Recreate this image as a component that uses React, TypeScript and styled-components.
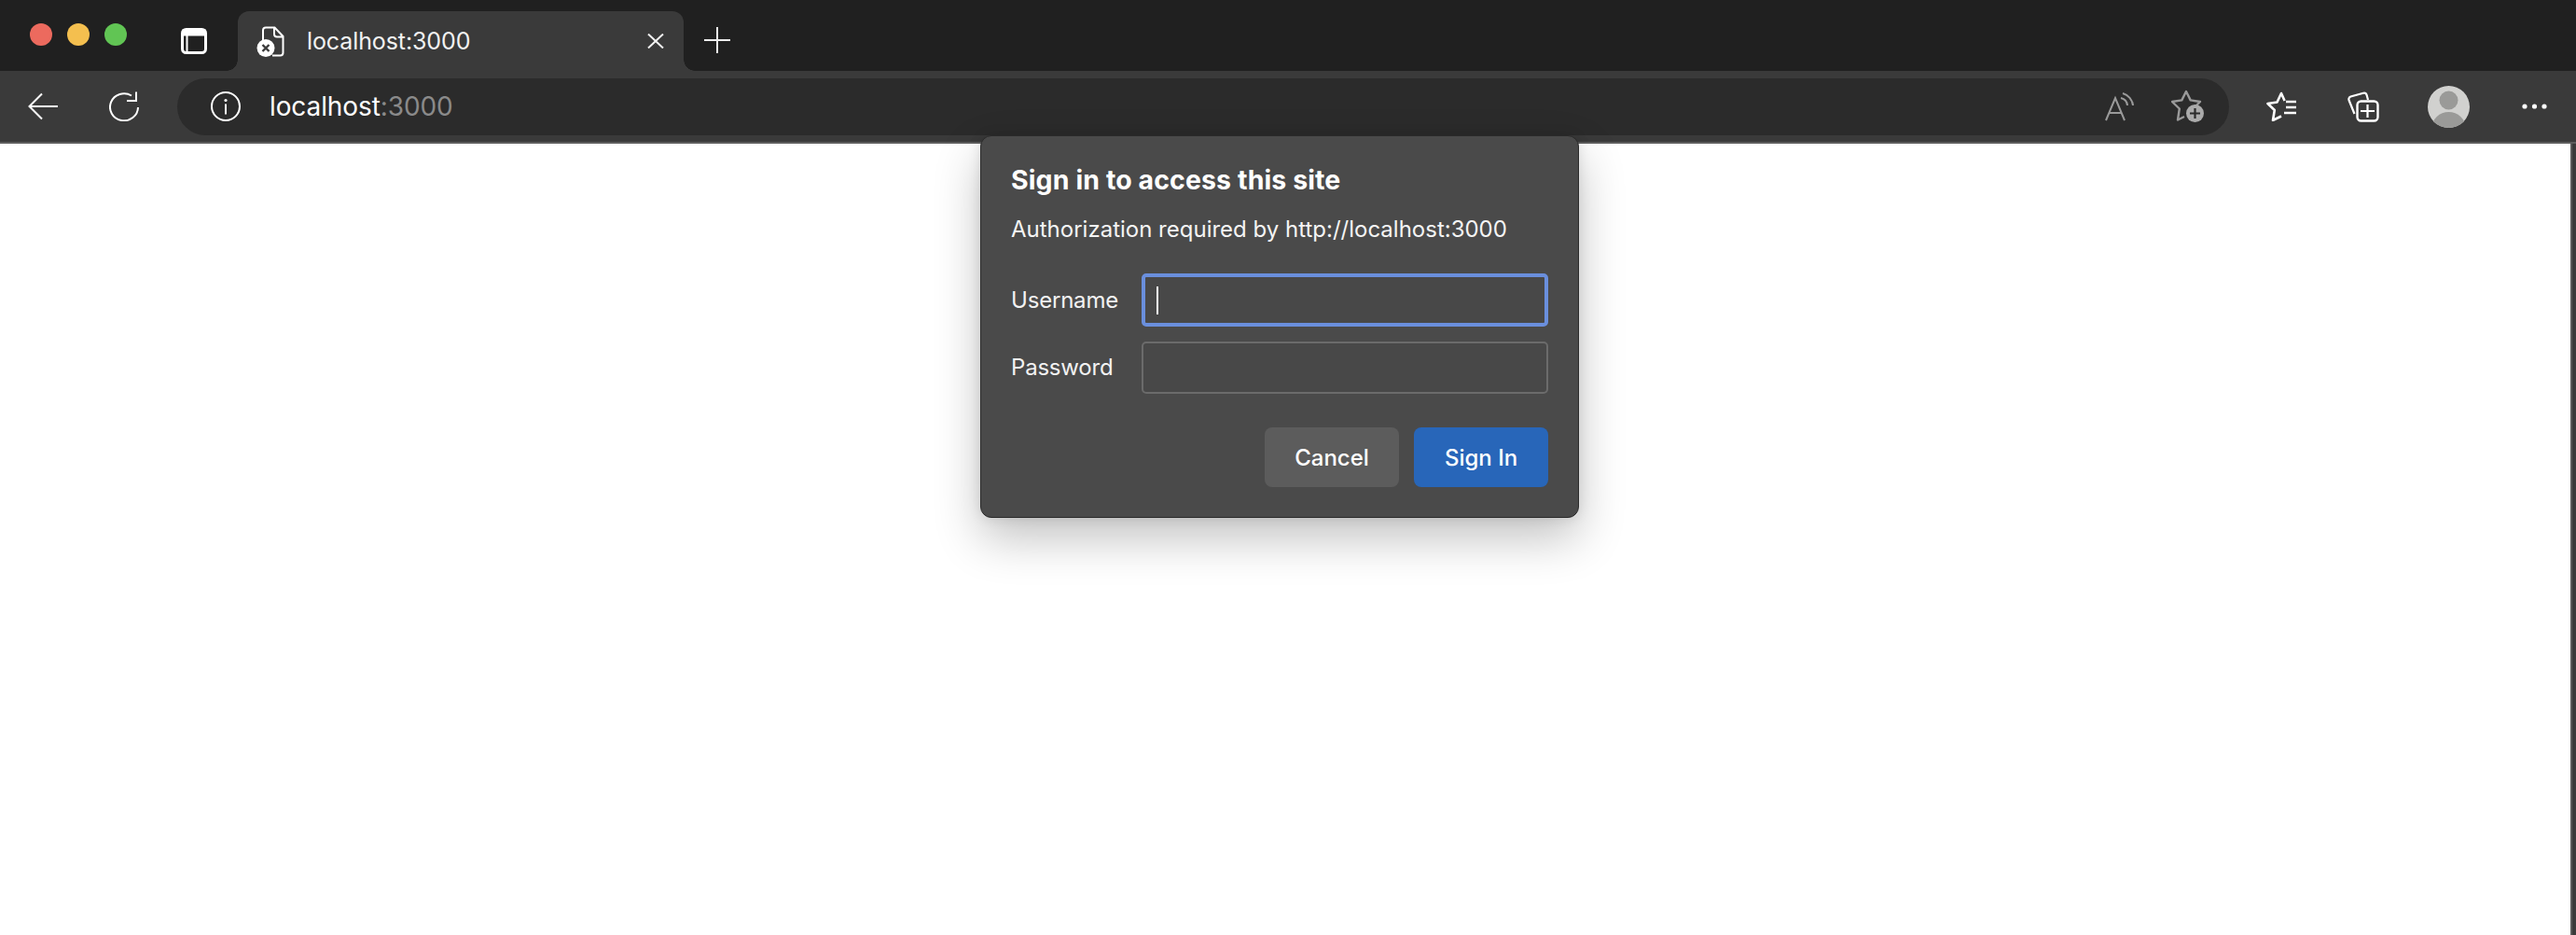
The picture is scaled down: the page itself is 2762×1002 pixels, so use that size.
import React from "react";
import styled, { createGlobalStyle } from "styled-components";

const Global = createGlobalStyle`
  html, body { margin: 0; padding: 0; background: #fff; }
  body { font-family: Inter, "Liberation Sans", sans-serif; -webkit-font-smoothing: antialiased; }
  * { box-sizing: border-box; }
`;

const Window = styled.div`
  position: relative;
  display: flex;
  flex-direction: column;
  width: 2762px;
  height: 1002px;
  overflow: hidden;
  background: #fff;
`;

const TabStrip = styled.header`
  display: flex;
  align-items: flex-start;
  height: 76px;
  padding-left: 32px;
  background: #202020;
  flex: none;
`;

const Lights = styled.div`
  display: flex;
  gap: 16px;
  margin-top: 25px;
`;

const Light = styled.span<{ $color: string }>`
  width: 24px;
  height: 24px;
  border-radius: 50%;
  background: ${(p) => p.$color};
`;

const StripIcon = styled.svg<{ $left: number; $top: number }>`
  flex: none;
  display: block;
  margin-left: ${(p) => p.$left}px;
  margin-top: ${(p) => p.$top}px;
`;

const Tab = styled.div`
  position: relative;
  display: flex;
  align-items: center;
  flex: none;
  width: 478px;
  height: 64px;
  margin-top: 12px;
  margin-left: 33px;
  padding: 0 21px 0 20px;
  background: #3a3a3a;
  border-radius: 12px 12px 0 0;

  &::before,
  &::after {
    content: "";
    position: absolute;
    bottom: 0;
    width: 12px;
    height: 12px;
    background: radial-gradient(circle at var(--cx) 0, #202020 11.5px, #3a3a3a 12px);
  }
  &::before { left: -12px; --cx: 0; }
  &::after { right: -12px; --cx: 12px; }
`;

const TabTitle = styled.span`
  flex: 1;
  margin-left: 24px;
  font-size: 25px;
  line-height: 32px;
  letter-spacing: -0.1px;
  color: #f2f2f2;
`;

const Toolbar = styled.nav`
  display: flex;
  align-items: center;
  flex: none;
  height: 78px;
  background: #3a3a3a;
  border-bottom: 2px solid #5d5d5d;
`;

const ToolIcon = styled.svg<{ $left: number }>`
  flex: none;
  display: block;
  margin-left: ${(p) => p.$left}px;
`;

const Omnibox = styled.div`
  display: flex;
  align-items: center;
  flex: none;
  width: 2200px;
  height: 61px;
  margin-left: 40px;
  padding-left: 36px;
  background: #2b2b2b;
  border-radius: 31px;
`;

const Address = styled.span`
  margin-left: 31px;
  margin-right: auto;
  font-size: 28px;
  line-height: 36px;
  letter-spacing: -0.1px;
  color: #fff;
`;

const Port = styled.span`
  color: #8a8a8a;
`;

const Page = styled.main`
  flex: 1;
  background: #fff;
  border-right: 4px solid #3a3a3a;
  box-shadow: inset -2px 0 0 #5a5a5a;
`;

const Dialog = styled.section`
  position: absolute;
  left: 1051px;
  top: 145px;
  width: 642px;
  height: 410px;
  padding: 29px 32px 0;
  background: #4a4a4a;
  border: 1px solid #2a2a2a;
  border-radius: 12px;
  box-shadow: 0 22px 50px rgba(0, 0, 0, 0.24), 0 0 14px rgba(0, 0, 0, 0.1);
  color: #fff;
`;

const Title = styled.h1`
  margin: 0;
  font-size: 28.5px;
  line-height: 36px;
  font-weight: 700;
  letter-spacing: 0.1px;
`;

const Description = styled.p`
  margin: 19px 0 0;
  font-size: 24px;
  line-height: 32px;
  color: #f4f4f4;
`;

const Form = styled.div`
  display: grid;
  grid-template-columns: 140px 436px;
  row-gap: 16px;
  margin-top: 31px;
  align-items: center;
`;

const Label = styled.label`
  font-size: 24px;
  line-height: 32px;
  letter-spacing: -0.2px;
  color: #f2f2f2;
`;

const Field = styled.div<{ $focused?: boolean }>`
  display: flex;
  align-items: center;
  height: ${(p) => (p.$focused ? 57 : 56)}px;
  padding-left: ${(p) => (p.$focused ? 12 : 15)}px;
  background: #484848;
  border: ${(p) => (p.$focused ? "4px solid #6a8fdd" : "2px solid #6b6b6b")};
  border-radius: 5px;
`;

const Caret = styled.span`
  width: 2px;
  height: 30px;
  background: #fff;
`;

const Actions = styled.div`
  display: flex;
  justify-content: flex-end;
  gap: 16px;
  margin-top: 36px;
`;

const Button = styled.button<{ $primary?: boolean }>`
  width: 144px;
  height: 64px;
  padding: 0;
  border: 0;
  border-radius: 8px;
  font: 500 24px Inter, "Liberation Sans", sans-serif;
  color: #fff;
  background: ${(p) => (p.$primary ? "#2866b9" : "#5c5c5c")};
`;

export default function App() {
  return (
    <Window>
      <Global />
      <TabStrip>
        <Lights>
          <Light $color="#ec6a5e" />
          <Light $color="#f4bf4f" />
          <Light $color="#61c554" />
        </Lights>
        <StripIcon $left={58} $top={30} width="28" height="28" viewBox="0 0 28 28" fill="none">
          <rect x="1.5" y="1.5" width="25" height="25" rx="4" stroke="#fff" strokeWidth="3" />
          <rect x="1.5" y="1.5" width="25" height="7" fill="#fff" />
          <path d="M6.5 8v18" stroke="#fff" strokeWidth="2" />
        </StripIcon>
        <Tab>
          <svg width="30" height="33" viewBox="0 0 30 33" fill="none">
            <path
              d="M7 16V4.5A3 3 0 0 1 10 1.5h9.5L28.5 11v17.5a3 3 0 0 1-3 3H17M19 2v6.5a3 3 0 0 0 3 3h6"
              stroke="#fff"
              strokeWidth="2"
            />
            <circle cx="10" cy="23.5" r="9.5" fill="#fff" />
            <path d="M6.5 20l7 7M13.5 20l-7 7" stroke="#3a3a3a" strokeWidth="2.4" />
          </svg>
          <TabTitle>localhost:3000</TabTitle>
          <svg width="18" height="16" viewBox="0 0 18 16" fill="none">
            <path d="M1 0.5l16 15M17 0.5l-16 15" stroke="#f2f2f2" strokeWidth="2" />
          </svg>
        </Tab>
        <StripIcon $left={22} $top={29} width="28" height="28" viewBox="0 0 28 28" fill="none">
          <path d="M14 0v28M0 14h28" stroke="#ededed" strokeWidth="2" />
        </StripIcon>
      </TabStrip>
      <Toolbar>
        <ToolIcon $left={30} width="32" height="30" viewBox="0 0 32 30" fill="none">
          <path d="M32 15H2M15 1.5L1.5 15 15 28.5" stroke="#fff" strokeWidth="2" />
        </ToolIcon>
        <ToolIcon $left={55} width="33" height="32" viewBox="0 0 33 32" fill="none">
          <path d="M31 17A15 14.5 0 1 1 24 4.5" stroke="#fff" strokeWidth="2" />
          <path d="M29 0.5V10H19" stroke="#fff" strokeWidth="2" />
        </ToolIcon>
        <Omnibox>
          <svg width="32" height="32" viewBox="0 0 32 32" fill="none">
            <circle cx="16" cy="16" r="15" stroke="#fff" strokeWidth="2" />
            <circle cx="16" cy="9.5" r="1.6" fill="#fff" />
            <path d="M16 13.5v11" stroke="#fff" strokeWidth="2" />
          </svg>
          <Address>
            localhost<Port>:3000</Port>
          </Address>
          <svg width="32" height="31" viewBox="0 0 32 31" fill="none">
            <path d="M1 30L11 6l10 24M4.5 22h13" stroke="#9a9a9a" strokeWidth="2" />
            <path d="M17 6a9 9 0 0 1 7 8M19 1a15 15 0 0 1 11 13" stroke="#9a9a9a" strokeWidth="2" />
          </svg>
          <ToolIcon $left={39} width="36" height="36" viewBox="0 0 36 36" fill="none" style={{ marginRight: 26 }}>
            <path
              d="M14 29L7 32.5l1.8-12L1 13l10.3-1.6L16 2l4.7 9.4L31 13l-4 4"
              stroke="#9a9a9a"
              strokeWidth="2.4"
              strokeLinejoin="round"
            />
            <circle cx="25.5" cy="25.5" r="9.5" fill="#ababab" />
            <path d="M25.5 20v11M20 25.5h11" stroke="#2b2b2b" strokeWidth="2.2" />
          </ToolIcon>
        </Omnibox>
        <ToolIcon $left={40} width="33" height="32" viewBox="0 0 33 32" fill="none">
          <path
            d="M16 26.5l-9 4.5 1.8-11L1.5 13l10-1.5L16 2l3.6 8"
            stroke="#fff"
            strokeWidth="2.6"
            strokeLinejoin="round"
          />
          <path d="M21 11h11M21 17h11M19 23h13" stroke="#fff" strokeWidth="2.6" />
        </ToolIcon>
        <ToolIcon $left={54} width="34" height="33" viewBox="0 0 34 33" fill="none">
          <path
            d="M7.5 24L1.6 9.5A3 3 0 0 1 3.4 5.5L17 1.8a3 3 0 0 1 3.6 2L22 9"
            stroke="#fff"
            strokeWidth="2.2"
          />
          <rect x="10.5" y="10.5" width="22" height="21" rx="4" stroke="#fff" strokeWidth="2.4" />
          <path d="M21.5 14v14M14 21h15" stroke="#fff" strokeWidth="2.2" />
        </ToolIcon>
        <ToolIcon $left={52} width="45" height="45" viewBox="0 0 45 45">
          <clipPath id="avatar-clip">
            <circle cx="22.5" cy="22.5" r="22.5" />
          </clipPath>
          <circle cx="22.5" cy="22.5" r="22.5" fill="#d1d1cf" />
          <circle cx="22.5" cy="15.5" r="10" fill="#9a9a98" />
          <ellipse cx="22.5" cy="45" rx="18" ry="17" fill="#9a9a98" clipPath="url(#avatar-clip)" />
        </ToolIcon>
        <ToolIcon $left={56} width="27" height="6" viewBox="0 0 27 6" fill="#fff">
          <circle cx="3" cy="3" r="2.6" />
          <circle cx="13.5" cy="3" r="2.6" />
          <circle cx="24" cy="3" r="2.6" />
        </ToolIcon>
      </Toolbar>
      <Page />
      <Dialog>
        <Title>Sign in to access this site</Title>
        <Description>Authorization required by http://localhost:3000</Description>
        <Form>
          <Label>Username</Label>
          <Field $focused>
            <Caret />
          </Field>
          <Label>Password</Label>
          <Field />
        </Form>
        <Actions>
          <Button>Cancel</Button>
          <Button $primary>Sign In</Button>
        </Actions>
      </Dialog>
    </Window>
  );
}
